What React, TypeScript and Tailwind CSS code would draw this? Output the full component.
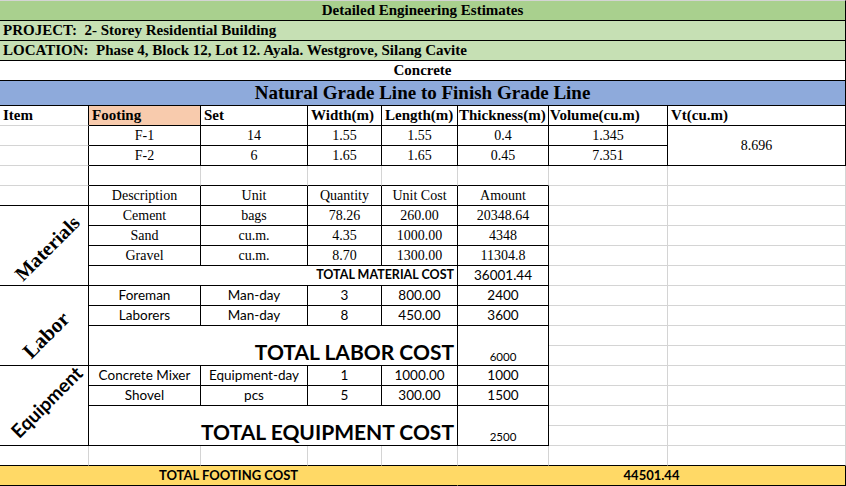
import React from "react";

const RB = "border-r-black border-b-black";
const Rb = "border-r-black border-b-[#d4d4d4]";
const rB = "border-r-[#d4d4d4] border-b-black";
const rb = "border-r-[#d4d4d4] border-b-[#d4d4d4]";

const SERIF = "font-['Liberation_Serif',serif]";
const SANS = "font-['Lato',sans-serif]";

function C({ cls, children, ov }: { cls: string; children?: React.ReactNode; ov?: boolean }) {
  return (
    <div
      className={
        "flex whitespace-nowrap border-r border-b text-black " +
        (ov ? "overflow-visible " : "overflow-hidden ") +
        cls
      }
    >
      {children}
    </div>
  );
}

const hdr = "items-center justify-start pl-[3px] font-bold text-[15px] " + SERIF;
const num = "items-center justify-center text-[14px] " + SERIF;
const sv = "items-center justify-center text-[13.5px] " + SANS;

export default function App() {
  return (
    <div className="w-[846px] h-[486px] bg-white overflow-hidden">
      <div className="grid w-[846px] grid-cols-[89px_112px_107px_74px_76px_91px_119px_1fr] grid-rows-[21px_20px_20px_20px_25px_repeat(19,20px)]">
        {/* Title rows */}
        <C cls={"col-start-1 col-span-8 row-start-1 border-t border-t-[#d4d4d4] bg-[#a9d08e] items-center justify-center font-bold text-[15px] " + SERIF + " " + RB}>
          Detailed Engineering Estimates
        </C>
        <C cls={"col-start-1 col-span-8 row-start-2 bg-[#c6e0b4] " + hdr + " " + RB}>
          PROJECT:&nbsp;&nbsp;2- Storey Residential Building
        </C>
        <C cls={"col-start-1 col-span-8 row-start-3 bg-[#c6e0b4] " + hdr + " " + RB}>
          LOCATION:&nbsp;&nbsp;Phase 4, Block 12, Lot 12. Ayala. Westgrove, Silang Cavite
        </C>
        <C cls={"col-start-1 col-span-8 row-start-4 bg-white items-center justify-center font-bold text-[15px] " + SERIF + " " + RB}>
          Concrete
        </C>
        <C cls={"col-start-1 col-span-8 row-start-5 bg-[#8eaadb] items-center justify-center font-bold text-[19px] " + SERIF + " " + RB}>
          Natural Grade Line to Finish Grade Line
        </C>

        {/* Column header row */}
        <C cls={"col-start-1 row-start-6 " + hdr + " " + Rb}>Item</C>
        <C cls={"col-start-2 row-start-6 bg-[#f8cbad] " + hdr + " " + RB}>Footing</C>
        <C cls={"col-start-3 row-start-6 " + hdr + " " + RB}>Set</C>
        <C cls={"col-start-4 row-start-6 " + hdr + " " + RB}>Width(m)</C>
        <C cls={"col-start-5 row-start-6 " + hdr + " " + RB}>Length(m)</C>
        <C cls={"col-start-6 row-start-6 " + hdr + " !pl-[1px] " + RB}>Thickness(m)</C>
        <C cls={"col-start-7 row-start-6 " + hdr + " !pl-[1px] " + RB}>Volume(cu.m)</C>
        <C cls={"col-start-8 row-start-6 " + hdr + " " + RB}>Vt(cu.m)</C>

        {/* F-1 */}
        <C cls={"col-start-1 row-start-7 " + Rb} />
        <C cls={"col-start-2 row-start-7 " + num + " " + RB}>F-1</C>
        <C cls={"col-start-3 row-start-7 " + num + " " + RB}>14</C>
        <C cls={"col-start-4 row-start-7 " + num + " " + RB}>1.55</C>
        <C cls={"col-start-5 row-start-7 " + num + " " + RB}>1.55</C>
        <C cls={"col-start-6 row-start-7 " + num + " " + RB}>0.4</C>
        <C cls={"col-start-7 row-start-7 " + num + " " + RB}>1.345</C>
        <C cls={"col-start-8 row-start-7 row-span-2 " + num + " " + RB}>8.696</C>
        {/* F-2 */}
        <C cls={"col-start-1 row-start-8 " + Rb} />
        <C cls={"col-start-2 row-start-8 " + num + " " + RB}>F-2</C>
        <C cls={"col-start-3 row-start-8 " + num + " " + RB}>6</C>
        <C cls={"col-start-4 row-start-8 " + num + " " + RB}>1.65</C>
        <C cls={"col-start-5 row-start-8 " + num + " " + RB}>1.65</C>
        <C cls={"col-start-6 row-start-8 " + num + " " + RB}>0.45</C>
        <C cls={"col-start-7 row-start-8 " + num + " " + RB}>7.351</C>

        {/* empty row 9 */}
        <C cls={"col-start-1 row-start-9 " + Rb} />
        <C cls={"col-start-2 row-start-9 " + rB} />
        <C cls={"col-start-3 row-start-9 " + rB} />
        <C cls={"col-start-4 row-start-9 " + rB} />
        <C cls={"col-start-5 row-start-9 " + rB} />
        <C cls={"col-start-6 row-start-9 " + rB} />
        <C cls={"col-start-7 row-start-9 " + rb} />
        <C cls={"col-start-8 row-start-9 " + rb} />

        {/* Description header row 10 */}
        <C cls={"col-start-1 row-start-10 " + RB} />
        <C cls={"col-start-2 row-start-10 " + num + " " + RB}>Description</C>
        <C cls={"col-start-3 row-start-10 " + num + " " + RB}>Unit</C>
        <C cls={"col-start-4 row-start-10 " + num + " " + RB}>Quantity</C>
        <C cls={"col-start-5 row-start-10 " + num + " " + RB}>Unit Cost</C>
        <C cls={"col-start-6 row-start-10 " + num + " " + RB}>Amount</C>

        {/* Materials */}
        <C ov cls={"col-start-1 row-start-11 row-span-4 items-center justify-center " + RB}>
          <span className={"-rotate-45 translate-x-[3px] translate-y-[2px] font-bold text-[20px] leading-[22px] " + SERIF}>Materials</span>
        </C>
        <C cls={"col-start-2 row-start-11 " + num + " " + RB}>Cement</C>
        <C cls={"col-start-3 row-start-11 " + num + " " + RB}>bags</C>
        <C cls={"col-start-4 row-start-11 " + num + " " + RB}>78.26</C>
        <C cls={"col-start-5 row-start-11 " + num + " " + RB}>260.00</C>
        <C cls={"col-start-6 row-start-11 " + num + " " + RB}>20348.64</C>
        <C cls={"col-start-2 row-start-12 " + num + " " + RB}>Sand</C>
        <C cls={"col-start-3 row-start-12 " + num + " " + RB}>cu.m.</C>
        <C cls={"col-start-4 row-start-12 " + num + " " + RB}>4.35</C>
        <C cls={"col-start-5 row-start-12 " + num + " " + RB}>1000.00</C>
        <C cls={"col-start-6 row-start-12 " + num + " " + RB}>4348</C>
        <C cls={"col-start-2 row-start-13 " + num + " " + RB}>Gravel</C>
        <C cls={"col-start-3 row-start-13 " + num + " " + RB}>cu.m.</C>
        <C cls={"col-start-4 row-start-13 " + num + " " + RB}>8.70</C>
        <C cls={"col-start-5 row-start-13 " + num + " " + RB}>1300.00</C>
        <C cls={"col-start-6 row-start-13 " + num + " " + RB}>11304.8</C>
        <C cls={"col-start-2 col-span-4 row-start-14 items-center justify-end pr-[3px] font-bold text-[12.5px] " + SANS + " " + RB}>
          TOTAL MATERIAL COST
        </C>
        <C cls={"col-start-6 row-start-14 " + sv + " " + RB}>36001.44</C>

        {/* Labor */}
        <C ov cls={"col-start-1 row-start-15 row-span-4 items-center justify-center " + RB}>
          <span className={"-rotate-45 translate-x-[2px] translate-y-[9px] font-bold text-[21px] leading-[20px] " + SERIF}>Labor</span>
        </C>
        <C cls={"col-start-2 row-start-15 " + sv + " " + RB}>Foreman</C>
        <C cls={"col-start-3 row-start-15 " + sv + " " + RB}>Man-day</C>
        <C cls={"col-start-4 row-start-15 " + sv + " " + RB}>3</C>
        <C cls={"col-start-5 row-start-15 " + sv + " " + RB}>800.00</C>
        <C cls={"col-start-6 row-start-15 " + sv + " " + RB}>2400</C>
        <C cls={"col-start-2 row-start-16 " + sv + " " + RB}>Laborers</C>
        <C cls={"col-start-3 row-start-16 " + sv + " " + RB}>Man-day</C>
        <C cls={"col-start-4 row-start-16 " + sv + " " + RB}>8</C>
        <C cls={"col-start-5 row-start-16 " + sv + " " + RB}>450.00</C>
        <C cls={"col-start-6 row-start-16 " + sv + " " + RB}>3600</C>
        <C cls={"col-start-2 col-span-4 row-start-17 row-span-2 items-end justify-end pr-[3px] pb-[1px] font-bold text-[21px] leading-[24px] " + SANS + " " + RB}>
          TOTAL LABOR COST
        </C>
        <C cls={"col-start-6 row-start-17 row-span-2 items-end justify-center pb-[1px] text-[11.5px] leading-[15px] " + SANS + " " + RB}>6000</C>

        {/* Equipment */}
        <C ov cls={"col-start-1 row-start-19 row-span-4 items-center justify-center " + RB}>
          <span className={"-rotate-45 translate-x-[3px] -translate-y-[4px] font-bold text-[19px] leading-[18px] " + SANS}>Equipment</span>
        </C>
        <C cls={"col-start-2 row-start-19 " + sv + " " + RB}>Concrete Mixer</C>
        <C cls={"col-start-3 row-start-19 " + sv + " " + RB}>Equipment-day</C>
        <C cls={"col-start-4 row-start-19 " + sv + " " + RB}>1</C>
        <C cls={"col-start-5 row-start-19 " + sv + " " + RB}>1000.00</C>
        <C cls={"col-start-6 row-start-19 " + sv + " " + RB}>1000</C>
        <C cls={"col-start-2 row-start-20 " + sv + " " + RB}>Shovel</C>
        <C cls={"col-start-3 row-start-20 " + sv + " " + RB}>pcs</C>
        <C cls={"col-start-4 row-start-20 " + sv + " " + RB}>5</C>
        <C cls={"col-start-5 row-start-20 " + sv + " " + RB}>300.00</C>
        <C cls={"col-start-6 row-start-20 " + sv + " " + RB}>1500</C>
        <C cls={"col-start-2 col-span-4 row-start-21 row-span-2 items-end justify-end pr-[3px] pb-[1px] font-bold text-[21px] leading-[24px] " + SANS + " " + RB}>
          TOTAL EQUIPMENT COST
        </C>
        <C cls={"col-start-6 row-start-21 row-span-2 items-end justify-center pb-[1px] text-[11.5px] leading-[15px] " + SANS + " " + RB}>2500</C>

        {/* right side gray grid for rows 10-22 */}
        {[10, 11, 12, 13, 14, 15, 16, 17, 18, 19, 20, 21, 22].map((r) => (
          <React.Fragment key={r}>
            <div className={"col-start-7 border-r border-b " + rb} style={{ gridRowStart: r }} />
            <div className={"col-start-8 border-r border-b " + rb} style={{ gridRowStart: r }} />
          </React.Fragment>
        ))}

        {/* empty row 23 */}
        <C cls={"col-start-1 row-start-23 " + rB} />
        <C cls={"col-start-2 row-start-23 " + rB} />
        <C cls={"col-start-3 row-start-23 " + rB} />
        <C cls={"col-start-4 row-start-23 " + rB} />
        <C cls={"col-start-5 row-start-23 " + rB} />
        <C cls={"col-start-6 row-start-23 " + rB} />
        <C cls={"col-start-7 row-start-23 " + rB} />
        <C cls={"col-start-8 row-start-23 " + rB} />

        {/* footer */}
        <C cls={"col-start-1 col-span-5 row-start-24 bg-[#ffd966] border-r-[#ffd966] border-b-black items-center justify-center font-bold text-[13px] " + SANS}>
          TOTAL FOOTING COST
        </C>
        <C cls={"col-start-6 col-span-3 row-start-24 bg-[#ffd966] items-center justify-center font-bold text-[13px] " + SANS + " " + RB}>
          44501.44
        </C>
      </div>
    </div>
  );
}
